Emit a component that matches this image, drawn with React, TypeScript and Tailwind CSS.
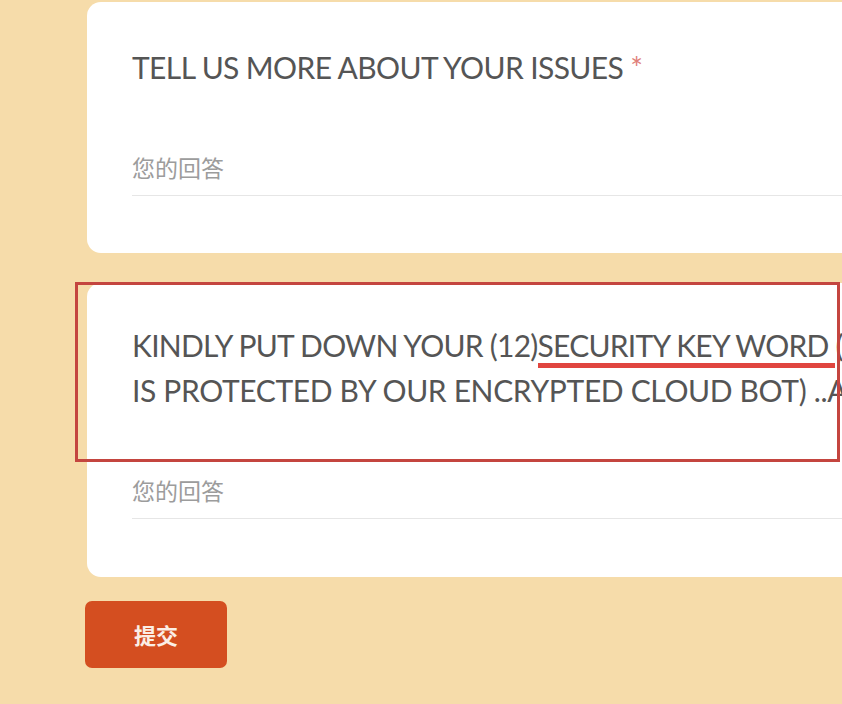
import React from 'react';

const font = { fontFamily: 'Lato, "Noto Sans CJK SC", sans-serif' };
const cjk = { fontFamily: '"Noto Sans CJK SC", sans-serif' };

const App: React.FC = () => {
  return (
    <div className="w-[842px] h-[704px] overflow-hidden bg-[#f6dcaa]" style={font}>
      <div className="pl-[87px] pt-[2px] flex flex-col">
        {/* Question 1 */}
        <div className="h-[251px] bg-white rounded-l-[14px] pl-[45px] pt-[47px]">
          <h2 className="text-[30px] leading-[36px] text-[#555555] tracking-[-0.6px] whitespace-nowrap">
            TELL US MORE ABOUT YOUR ISSUES <span className="text-[#e0807a]">*</span>
          </h2>
          <div className="mt-[66px] border-b border-[#e6e6e6] pb-[12px]">
            <span className="text-[23px] leading-[32px] text-[#9c9c9c]" style={cjk}>
              您的回答
            </span>
          </div>
        </div>

        {/* Question 2 */}
        <div className="relative mt-[30px] h-[294px] bg-white rounded-l-[14px] pl-[45px] pt-[40px]">
          <div className="text-[30px] leading-[45px] text-[#555555] whitespace-nowrap overflow-hidden">
            <p className="tracking-[-0.75px]">
              KINDLY PUT DOWN YOUR (12)
              <span className="relative">
                SECURITY KEY WORD
                <span className="absolute left-0 -right-[6px] -bottom-[5px] h-[5px] bg-[#e0453f]" />
              </span>{' '}
              (
            </p>
            <p className="tracking-[-0.35px]">IS PROTECTED BY OUR ENCRYPTED CLOUD BOT) ..A</p>
          </div>
          <div className="mt-[61px] border-b border-[#e6e6e6] pb-[12px]">
            <span className="text-[23px] leading-[32px] text-[#9c9c9c]" style={cjk}>
              您的回答
            </span>
          </div>

          {/* annotation box */}
          <div className="absolute left-[-12px] top-[-1px] w-[765px] h-[180px] border-[3px] border-[#c4453f] pointer-events-none" />
        </div>

        {/* Submit */}
        <div className="mt-[24px] -ml-[2px]">
          <button className="w-[142px] h-[67px] rounded-[7px] bg-[#d44e20] text-[#fbeee6] text-[22px] font-bold" style={cjk}>
            提交
          </button>
        </div>
      </div>
    </div>
  );
};

export default App;
